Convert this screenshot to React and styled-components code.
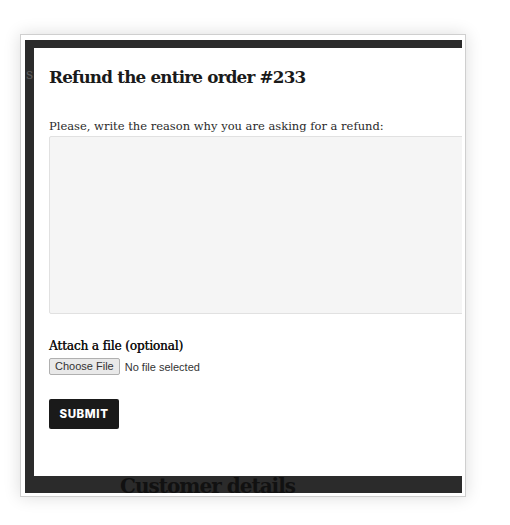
import React from "react";
import styled, { createGlobalStyle } from "styled-components";

const Global = createGlobalStyle`
  html, body { margin: 0; padding: 0; background: #ffffff; }
  body { width: 510px; height: 525px; overflow: hidden; }
`;

const Page = styled.div`
  padding: 34px 0 0 20px;
`;

const Shot = styled.div`
  width: 446px;
  height: 463px;
  box-sizing: border-box;
  border: 1px solid #cfcfcf;
  background: #ffffff;
  box-shadow: 0 0 16px rgba(0, 0, 0, 0.14);
  padding: 5px 3px 3px 4px;
`;

const Backdrop = styled.div`
  position: relative;
  height: 100%;
  background: #2b2b2b;
  padding: 8px 0 0 9px;
  box-sizing: border-box;
  overflow: hidden;
  display: flex;
  flex-direction: column;
`;

const BehindGlyph = styled.span`
  position: absolute;
  left: 1px;
  top: 26px;
  font-family: "DejaVu Serif", serif;
  font-size: 14px;
  color: #5a5a5a;
`;

const Modal = styled.div`
  position: relative;
  height: 428px;
  flex: none;
  background: #ffffff;
  padding: 0 0 0 15px;
  box-sizing: border-box;
  overflow: hidden;
`;

const Title = styled.h2`
  margin: 0;
  padding-top: 15px;
  font-family: "DejaVu Serif", serif;
  font-weight: bold;
  font-size: 16.8px;
  letter-spacing: -0.8px;
  line-height: 28px;
  color: #1a1a1a;
  white-space: nowrap;
`;

const Label = styled.label`
  display: block;
  margin-top: ${(p) => p.$top}px;
  font-family: "DejaVu Serif", serif;
  font-weight: normal;
  font-size: ${(p) => (p.$strong ? "12px" : "11.5px")};
  letter-spacing: ${(p) => (p.$strong ? "-0.1px" : "0")};
  line-height: 16px;
  color: ${(p) => (p.$strong ? "#111111" : "#2a2a2a")};
  text-shadow: ${(p) => (p.$strong ? "0.3px 0 0 #111" : "none")};
  white-space: nowrap;
`;

const Reason = styled.textarea`
  display: block;
  margin-top: 2px;
  width: 440px;
  height: 178px;
  box-sizing: border-box;
  background: #f5f5f5;
  border: 1px solid #e1e1e1;
  border-radius: 2px;
  resize: none;
  outline: none;
`;

const FileRow = styled.div`
  display: flex;
  align-items: center;
  gap: 5px;
  margin-top: 4px;
  font-family: "Liberation Sans", Arial, sans-serif;
  font-size: 11px;
  color: #333333;
`;

const FileButton = styled.label`
  display: inline-flex;
  align-items: center;
  height: 17px;
  padding: 0 5px;
  box-sizing: border-box;
  background: #e9e9e9;
  border: 1px solid #b0b0b0;
  border-radius: 2px;
  color: #333333;
  line-height: 1;
  input { display: none; }
`;

const FileStatus = styled.span`
  color: #333333;
`;

const Submit = styled.button`
  display: block;
  margin-top: 24px;
  width: 70px;
  height: 30px;
  background: #1a1a1a;
  color: #ffffff;
  border: none;
  border-radius: 2px;
  font-family: Inter, "Open Sans", sans-serif;
  font-weight: 800;
  font-size: 11.5px;
  letter-spacing: 0.6px;
  padding: 0;
`;

const Strip = styled.div`
  flex: 1;
  overflow: hidden;
  padding-left: 86px;
`;

const StripText = styled.div`
  font-family: "DejaVu Serif", serif;
  font-weight: bold;
  font-size: 20px;
  letter-spacing: -1px;
  line-height: 20px;
  color: #111111;
  white-space: nowrap;
`;

export default function App() {
  return (
    <>
      <Global />
      <Page>
        <Shot>
          <Backdrop>
            <BehindGlyph>s</BehindGlyph>
            <Modal>
              <Title>Refund the entire order #233</Title>
              <Label $top={27} htmlFor="reason">
                Please, write the reason why you are asking for a refund:
              </Label>
              <Reason id="reason" />
              <Label $top={24} $strong htmlFor="file">
                Attach a file (optional)
              </Label>
              <FileRow>
                <FileButton>
                  Choose File
                  <input id="file" type="file" />
                </FileButton>
                <FileStatus>No file selected</FileStatus>
              </FileRow>
              <Submit type="button">SUBMIT</Submit>
            </Modal>
            <Strip>
              <StripText>Customer details</StripText>
            </Strip>
          </Backdrop>
        </Shot>
      </Page>
    </>
  );
}
